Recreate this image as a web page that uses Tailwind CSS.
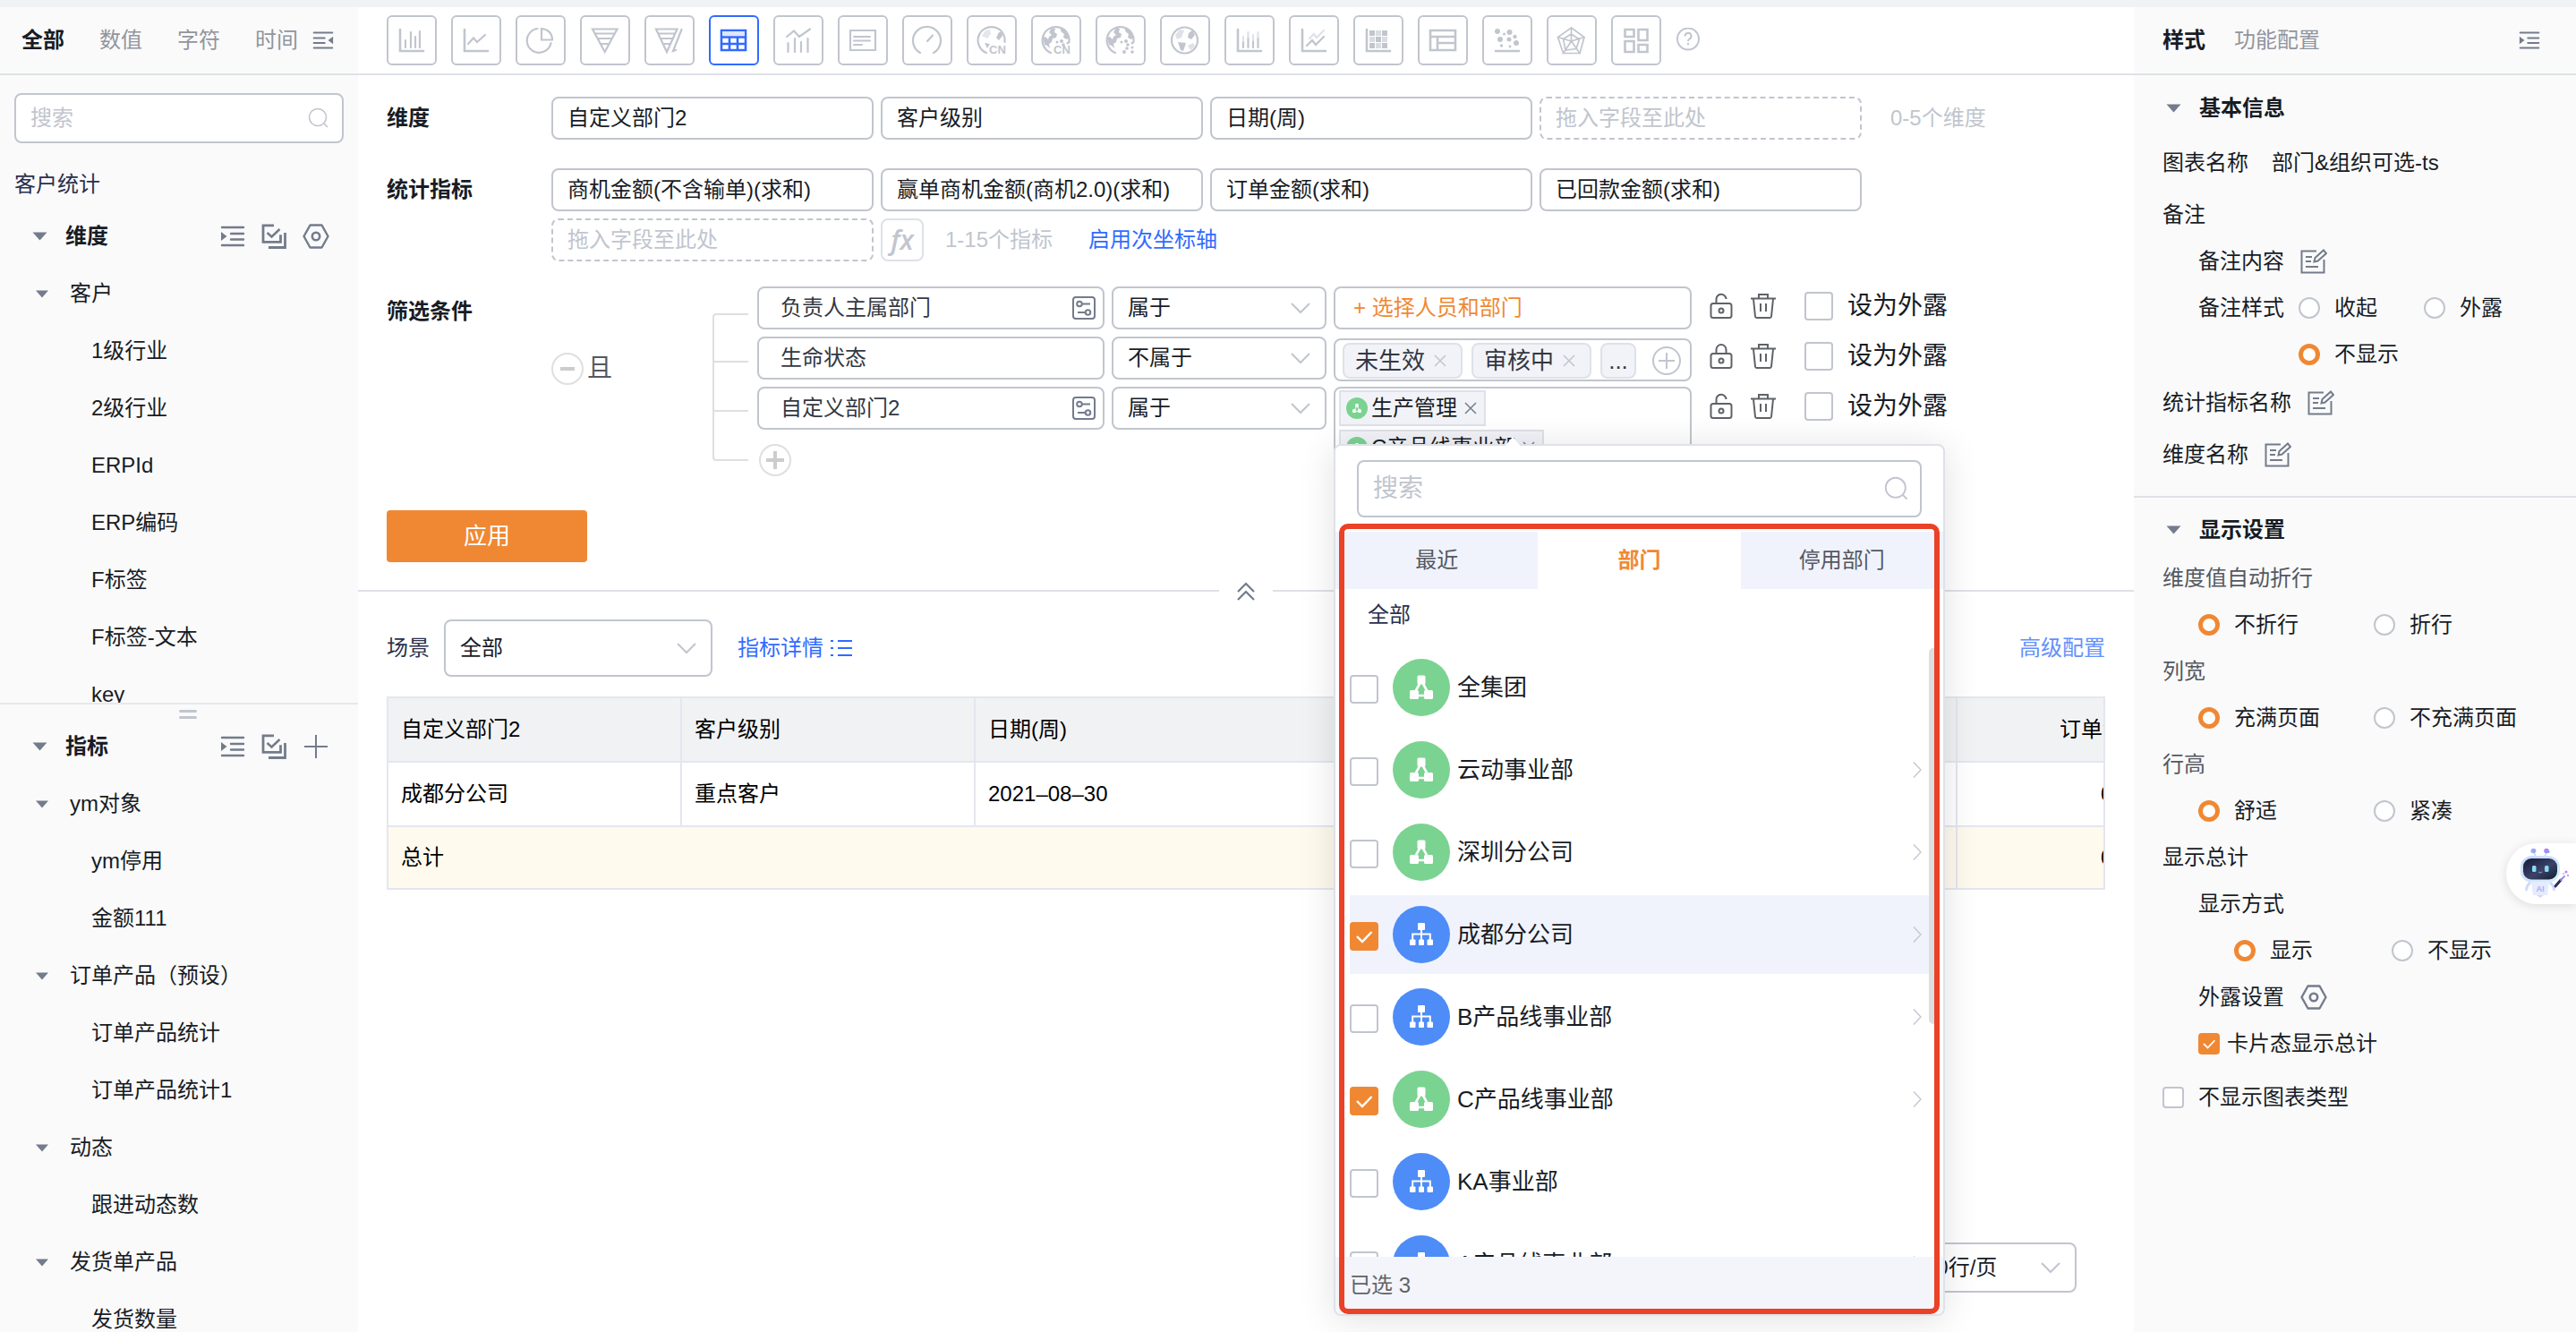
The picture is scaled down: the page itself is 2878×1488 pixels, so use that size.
<!DOCTYPE html>
<html lang="zh-CN">
<head>
    <meta charset="UTF-8">
    <meta name="viewport" content="width=device-width, initial-scale=1.0">
    <title>客户统计</title>
    <script src="https://cdn.jsdelivr.net/npm/@tailwindcss/browser@4"></script>
</head>
<body class="flex h-screen flex-col overflow-hidden bg-white font-['Liberation_Sans','Noto_Sans_CJK_SC',sans-serif] text-[24px] leading-[32px] text-[#181c25]">

    <!-- Shared icons -->
    <svg class="hidden">
        <symbol id="i-search" viewBox="0 0 24 24"><g fill="none" stroke="currentColor" stroke-width="1.6"><circle cx="11" cy="11" r="9.5"/><path d="M18 18l4 4"/></g></symbol>
        <symbol id="i-expand" viewBox="0 0 28 24"><g stroke="currentColor" stroke-width="2.4" stroke-linecap="round"><path d="M2 2h24M12 9h14M12 15.500h14M2 22h24"/></g><path d="M1 7l6.500 5L1 17z" fill="currentColor"/></symbol>
        <symbol id="i-collapse" viewBox="0 0 28 24"><g stroke="currentColor" stroke-width="2.4" stroke-linecap="round"><path d="M2 2h24M2 9h14M2 15.500h14M2 22h24"/></g><path d="M27 7l-6.500 5 6.500 5z" fill="currentColor"/></symbol>
        <symbol id="i-multi" viewBox="0 0 28 28"><g fill="none" stroke="currentColor" stroke-width="2.800"><path d="M14 1.900H2v18.400h19.500v-8"/><path d="M26.500 10v16.500H8"/><path d="M6.500 10l5 4.500 9-8.500" stroke-width="2.500"/></g></symbol>
        <symbol id="i-hex" viewBox="0 0 30 28"><g fill="none" stroke="currentColor" stroke-width="2.400"><path d="M8.500 1.500h13L28.500 14l-7 12.500h-13L1.500 14z" stroke-linejoin="round"/><circle cx="15" cy="14" r="4.200" stroke-width="2.600"/></g></symbol>
        <symbol id="i-plus" viewBox="0 0 28 28"><path d="M14 1v26M1 14h26" stroke="currentColor" stroke-width="2" fill="none"/></symbol>
        <symbol id="i-caret" viewBox="0 0 16 10"><path d="M0 .5h16L8 9.500z" fill="currentColor"/></symbol>
        <symbol id="i-down" viewBox="0 0 24 14"><path d="M2 2l10 10L22 2" stroke="currentColor" stroke-width="2" fill="none"/></symbol>
        <symbol id="i-right" viewBox="0 0 10 18"><path d="M1 .500l8 8.500-8 8.500" stroke="currentColor" stroke-width="1.300" fill="none"/></symbol>
        <symbol id="i-x" viewBox="0 0 14 14"><path d="M1 1l12 12M13 1L1 13" stroke="currentColor" stroke-width="1.500" fill="none"/></symbol>
        <symbol id="i-edit" viewBox="0 0 30 28"><g fill="none" stroke="currentColor" stroke-width="2"><path d="M18 2.500H1.500v24h25V12"/><path d="M6 9h7M6 14h6M6 20h14"/><path d="M15.500 14.500l1-4.500L26 1.500 29 5l-9.500 8.500z"/></g></symbol>
        <symbol id="i-field" viewBox="0 0 26 26"><g fill="none" stroke="currentColor" stroke-width="2"><rect x="1" y="1" width="24" height="24" rx="3"/><circle cx="8" cy="8.500" r="2.800"/><path d="M11 8.500h9M6 18h9"/><circle cx="17.500" cy="18" r="2.800"/></g></symbol>
        <symbol id="i-unlock" viewBox="0 0 26 30"><g fill="none" stroke="currentColor" stroke-width="2"><rect x="1.500" y="12" width="23" height="16" rx="2.500"/><path d="M7.500 12V7.500a5.500 5.500 0 0 1 11-.5"/><circle cx="13" cy="20" r="2.500"/></g></symbol>
        <symbol id="i-lock" viewBox="0 0 26 30"><g fill="none" stroke="currentColor" stroke-width="2"><rect x="1.500" y="12" width="23" height="16" rx="2.500"/><path d="M7.500 12V7.500a5.500 5.500 0 0 1 11 0V12"/><circle cx="13" cy="20" r="2.500"/></g></symbol>
        <symbol id="i-trash" viewBox="0 0 28 30"><g fill="none" stroke="currentColor" stroke-width="2"><path d="M0 6.500h28M9 6V2h10v4"/><path d="M3 7l2 19.500c.1 1 .8 1.500 1.600 1.500h14.800c.8 0 1.500-.5 1.600-1.500L25 7"/><path d="M11 12v9M17 12v9"/></g></symbol>
        <symbol id="i-org" viewBox="0 0 64 64"><circle cx="32" cy="32" r="32" fill="#7bd391"/><g fill="#fff"><rect x="27.500" y="18.500" width="9" height="10" rx="1.500"/><rect x="19" y="35" width="10" height="10" rx="1.500"/><rect x="35" y="35" width="10" height="10" rx="1.500"/></g><path d="M30.500 27L25 37M33.500 27L39 37M28 41h8" stroke="#fff" stroke-width="2.600"/></symbol>
        <symbol id="i-dept" viewBox="0 0 64 64"><circle cx="32" cy="32" r="32" fill="#4e8cf7"/><g fill="#fff"><rect x="28" y="19" width="8" height="8" rx="1"/><rect x="19" y="37.500" width="6.500" height="6.500" rx="1"/><rect x="29" y="37.500" width="6" height="6.500" rx="1"/><rect x="38.500" y="37.500" width="6.500" height="6.500" rx="1"/></g><path d="M32 26v12M22.200 38v-6.500h19.600V38" stroke="#fff" stroke-width="2" fill="none"/></symbol>
        <symbol id="i-tick" viewBox="0 0 32 32"><path d="M8 16l6 6L24.500 11" stroke="#fff" stroke-width="2.400" fill="none"/></symbol>
    </svg>

    <div class="h-2 shrink-0 bg-[#f1f2f4]"></div>

    <div class="flex min-h-0 flex-1">

        <!-- Field list -->
        <aside class="flex w-[400px] shrink-0 flex-col bg-[#fafafa]">
            <div class="flex h-[76px] shrink-0 items-center gap-[39px] border-b-2 border-[#dee1e8] pl-6 text-[#91959e]">
                <button class="font-bold text-[#181c25]">全部</button>
                <button>数值</button>
                <button>字符</button>
                <div class="flex items-center gap-4">
                    <button>时间</button>
                    <button aria-label="收起字段" class="text-[#737c8c]"><svg class="h-[22px] w-6"><use href="#i-collapse"/></svg></button>
                </div>
            </div>
            <div class="flex h-[701px] flex-col overflow-hidden">
                <div class="relative mx-4 mt-5 shrink-0">
                    <input type="text" aria-label="搜索字段" placeholder="搜索" class="h-14 w-full rounded-lg border-2 border-[#c1c5ce] bg-white pr-12 pl-4 placeholder:text-[#c1c5ce]">
                    <svg class="absolute top-4 right-4 h-6 w-6 text-[#c1c5ce]"><use href="#i-search"/></svg>
                </div>
                <div class="mt-5 flex h-[52px] shrink-0 items-center pl-4 text-[#2a304d]">客户统计</div>
                <div class="flex h-16 shrink-0 items-center pr-8 pl-9">
                    <svg class="mr-5 h-[10px] w-[17px] text-[#737c8c]"><use href="#i-caret"/></svg>
                    <b>维度</b>
                    <div class="ml-auto flex items-center gap-[18px] text-[#737c8c]">
                        <button aria-label="展开"><svg class="h-6 w-7"><use href="#i-expand"/></svg></button>
                        <button aria-label="多选"><svg class="h-7 w-7"><use href="#i-multi"/></svg></button>
                        <button aria-label="设置"><svg class="h-7 w-[30px]"><use href="#i-hex"/></svg></button>
                    </div>
                </div>
                <ul id="dimension-tree"></ul>
            </div>
            <div class="flex h-[17px] shrink-0 flex-col items-center gap-1 border-t-2 border-[#e6e8ee] pt-1.5 pl-5">
                <span class="h-[3px] w-5 shrink-0 rounded bg-[#c1c5ce]"></span>
                <span class="h-[3px] w-5 shrink-0 rounded bg-[#c1c5ce]"></span>
            </div>
            <div class="flex h-16 shrink-0 items-center pr-8 pl-9">
                <svg class="mr-5 h-[10px] w-[17px] text-[#737c8c]"><use href="#i-caret"/></svg>
                <b>指标</b>
                <div class="ml-auto flex items-center gap-[18px] text-[#737c8c]">
                    <button aria-label="展开"><svg class="h-6 w-7"><use href="#i-expand"/></svg></button>
                    <button aria-label="多选"><svg class="h-7 w-7"><use href="#i-multi"/></svg></button>
                    <button aria-label="新增"><svg class="h-7 w-[30px]"><use href="#i-plus"/></svg></button>
                </div>
            </div>
            <ul id="measure-tree" class="min-h-0 flex-1 overflow-hidden"></ul>
        </aside>

        <!-- Workspace -->
        <main class="flex min-w-0 flex-1 flex-col">
            <div id="chart-types" class="flex h-[76px] shrink-0 items-center gap-4 border-b-2 border-[#dee1e8] pl-8 text-[#c1c5ce]"></div>

            <section class="px-8 pt-6">
                <div class="flex">
                    <div class="flex h-12 w-[184px] shrink-0 items-center font-bold">维度</div>
                    <div class="flex flex-wrap items-center gap-2">
                        <div class="flex h-12 w-[360px] items-center rounded-lg border-2 border-[#c1c5ce] px-4">自定义部门2</div>
                        <div class="flex h-12 w-[360px] items-center rounded-lg border-2 border-[#c1c5ce] px-4">客户级别</div>
                        <div class="flex h-12 w-[360px] items-center rounded-lg border-2 border-[#c1c5ce] px-4">日期(周)</div>
                        <div class="flex h-12 w-[360px] items-center rounded-lg border-2 border-dashed border-[#c1c5ce] px-4 text-[#c1c5ce]">拖入字段至此处</div>
                        <span class="ml-6 text-[#c1c5ce]">0-5个维度</span>
                    </div>
                </div>

                <div class="mt-8 flex">
                    <div class="flex h-12 w-[184px] shrink-0 items-center font-bold">统计指标</div>
                    <div class="flex flex-wrap items-center gap-2">
                        <div class="flex h-12 w-[360px] items-center rounded-lg border-2 border-[#c1c5ce] px-4">商机金额(不含输单)(求和)</div>
                        <div class="flex h-12 w-[360px] items-center rounded-lg border-2 border-[#c1c5ce] px-4">赢单商机金额(商机2.0)(求和)</div>
                        <div class="flex h-12 w-[360px] items-center rounded-lg border-2 border-[#c1c5ce] px-4">订单金额(求和)</div>
                        <div class="flex h-12 w-[360px] items-center rounded-lg border-2 border-[#c1c5ce] px-4">已回款金额(求和)</div>
                        <div class="flex h-12 w-[360px] items-center rounded-lg border-2 border-dashed border-[#c1c5ce] px-4 text-[#c1c5ce]">拖入字段至此处</div>
                        <button class="h-12 w-12 rounded-lg border-2 border-[#dee1e8] font-['Open_Sans'] text-[30px] font-semibold text-[#c1c5ce] italic">fx</button>
                        <span class="ml-4 text-[#c1c5ce]">1-15个指标</span>
                        <a href="#" class="ml-8 text-[#316bff]">启用次坐标轴</a>
                    </div>
                </div>

                <div class="mt-7 flex">
                    <div class="flex h-14 w-[184px] shrink-0 items-center font-bold">筛选条件</div>
                    <div class="flex w-[180px] shrink-0 items-center gap-1 self-start pt-[74px]">
                        <button aria-label="删除条件组"><svg class="h-9 w-9" viewBox="0 0 36 36"><circle cx="18" cy="18" r="17" fill="none" stroke="#dfdfdf" stroke-width="2"/><path d="M10 18h16" stroke="#ccc" stroke-width="4"/></svg></button>
                        <span class="text-[28px] text-[#545861]">且</span>
                    </div>
                    <div class="mr-[10px] w-10 shrink-0 pt-[30px]">
                        <div class="h-[55px] rounded-tl border-t-2 border-b-2 border-l-2 border-[#dfdfdf]"></div>
                        <div class="h-[55px] border-b-2 border-l-2 border-[#dfdfdf]"></div>
                        <div class="h-[55px] rounded-bl border-b-2 border-l-2 border-[#dfdfdf]"></div>
                    </div>
                    <div class="flex flex-col gap-2">
                        <!-- Condition 1 -->
                        <div class="flex h-12 items-start gap-2">
                            <div class="flex h-12 w-[388px] items-center justify-between rounded-lg border-2 border-[#c1c5ce] pr-2 pl-6 text-[#333842]">负责人主属部门<svg class="h-[26px] w-[26px] text-[#737c8c]"><use href="#i-field"/></svg></div>
                            <div class="relative w-[240px]">
                                <select aria-label="负责人主属部门条件" class="h-12 w-full appearance-none rounded-lg border-2 border-[#c1c5ce] bg-white px-4"><option>属于</option></select>
                                <svg class="pointer-events-none absolute top-[17px] right-[17px] h-[14px] w-6 text-[#c1c5ce]"><use href="#i-down"/></svg>
                            </div>
                            <button class="h-12 w-[400px] rounded-lg border-2 border-[#c1c5ce] px-5 text-left text-[#f08833]">+ 选择人员和部门</button>
                            <div class="ml-3 flex h-11 items-center text-[#5f6368]">
                                <button aria-label="锁定" class="mr-5"><svg class="h-[30px] w-[26px]"><use href="#i-unlock"/></svg></button>
                                <button aria-label="删除" class="mr-8"><svg class="h-[30px] w-7"><use href="#i-trash"/></svg></button>
                                <label class="flex items-center gap-4 text-[28px] text-[#181c25]"><input type="checkbox" class="h-8 w-8 appearance-none rounded border-2 border-[#c1c5ce] bg-white">设为外露</label>
                            </div>
                        </div>
                        <!-- Condition 2 -->
                        <div class="flex h-12 items-start gap-2">
                            <div class="flex h-12 w-[388px] items-center rounded-lg border-2 border-[#c1c5ce] pl-6 text-[#333842]">生命状态</div>
                            <div class="relative w-[240px]">
                                <select aria-label="生命状态条件" class="h-12 w-full appearance-none rounded-lg border-2 border-[#c1c5ce] bg-white px-4"><option>不属于</option></select>
                                <svg class="pointer-events-none absolute top-[17px] right-[17px] h-[14px] w-6 text-[#c1c5ce]"><use href="#i-down"/></svg>
                            </div>
                            <div class="mt-0.5 flex h-12 w-[400px] items-center gap-[10px] rounded-lg border-2 border-[#c1c5ce] pt-0.5 pl-2 text-[26px] text-[#333842]">
                                <span class="flex h-10 w-[134px] items-center justify-between rounded-lg border-2 border-[#dee1e8] bg-[#f2f3f8] pr-4 pl-3">未生效<svg class="h-[14px] w-[14px] text-[#c1c5ce]"><use href="#i-x"/></svg></span>
                                <span class="flex h-10 w-[134px] items-center justify-between rounded-lg border-2 border-[#dee1e8] bg-[#f2f3f8] pr-4 pl-3">审核中<svg class="h-[14px] w-[14px] text-[#c1c5ce]"><use href="#i-x"/></svg></span>
                                <span class="flex h-10 w-10 items-center justify-center rounded-lg border-2 border-[#dee1e8] bg-[#f2f3f8]">...</span>
                                <button aria-label="添加选项" class="ml-2 text-[#c1c5ce]"><svg class="h-8 w-8" viewBox="0 0 32 32" fill="none" stroke="currentColor" stroke-width="2"><circle cx="16" cy="16" r="15"/><path d="M16 7v18M7 16h18"/></svg></button>
                            </div>
                            <div class="ml-3 flex h-11 items-center text-[#5f6368]">
                                <button aria-label="解锁" class="mr-5"><svg class="h-[30px] w-[26px]"><use href="#i-lock"/></svg></button>
                                <button aria-label="删除" class="mr-8"><svg class="h-[30px] w-7"><use href="#i-trash"/></svg></button>
                                <label class="flex items-center gap-4 text-[28px] text-[#181c25]"><input type="checkbox" class="h-8 w-8 appearance-none rounded border-2 border-[#c1c5ce] bg-white">设为外露</label>
                            </div>
                        </div>
                        <!-- Condition 3, with its department picker open -->
                        <div class="flex h-12 items-start gap-2">
                            <div class="flex h-12 w-[388px] items-center justify-between rounded-lg border-2 border-[#c1c5ce] pr-2 pl-6 text-[#333842]">自定义部门2<svg class="h-[26px] w-[26px] text-[#737c8c]"><use href="#i-field"/></svg></div>
                            <div class="relative w-[240px]">
                                <select aria-label="自定义部门2条件" class="h-12 w-full appearance-none rounded-lg border-2 border-[#c1c5ce] bg-white px-4"><option>属于</option></select>
                                <svg class="pointer-events-none absolute top-[17px] right-[17px] h-[14px] w-6 text-[#c1c5ce]"><use href="#i-down"/></svg>
                            </div>
                            <div class="relative w-[400px]">
                                <div class="flex flex-col items-start gap-1 rounded-lg border-2 border-[#c1c5ce] px-1 py-0.5">
                                    <span class="flex h-10 items-center gap-1 border-2 border-[#dee1e8] bg-[#f2f3f8] pr-2 pl-1.5"><svg class="h-6 w-6"><use href="#i-org"/></svg>生产管理<svg class="ml-1 h-[14px] w-[14px] text-[#737c8c]"><use href="#i-x"/></svg></span>
                                    <span class="flex h-10 items-center gap-1 border-2 border-[#dee1e8] bg-[#f2f3f8] pr-2 pl-1.5"><svg class="h-6 w-6"><use href="#i-org"/></svg>C产品线事业部<svg class="ml-1 h-[14px] w-[14px] text-[#737c8c]"><use href="#i-x"/></svg></span>
                                </div>
                                <div class="absolute top-16 left-0 z-10 flex h-[974px] w-[683px] flex-col rounded-lg border-2 border-[#dee1e8] bg-white pt-4 shadow-[0_4px_40px_rgba(0,0,0,0.12)]">
                                    <svg class="absolute -top-3 left-[188px] h-[14px] w-5" viewBox="0 0 20 14"><path d="M10 2l10 12H0z" fill="#fff"/></svg>
                                    <div class="relative mx-6">
                                        <input type="text" aria-label="搜索部门" placeholder="搜索" class="h-16 w-full rounded-lg border-2 border-[#c1c5ce] pr-14 pl-4 text-[28px] placeholder:text-[#c1c5ce]">
                                        <svg class="absolute top-[18px] right-[14px] h-7 w-7 text-[#c1c5ce]"><use href="#i-search"/></svg>
                                    </div>
                                    <div class="mt-4 grid h-16 shrink-0 grid-cols-3 text-[#545861]">
                                        <button class="bg-[#f0f3fc]">最近</button>
                                        <button class="bg-white font-bold text-[#f08833]">部门</button>
                                        <button class="bg-[#f0f3fc]">停用部门</button>
                                    </div>
                                    <div class="mb-2 flex h-[58px] shrink-0 items-center pl-9 text-[#2a304d]">全部</div>
                                    <div class="flex min-h-0 flex-1 overflow-hidden pr-1.5 pl-4">
                                        <ul id="dept-list" class="flex flex-1 flex-col gap-1 text-[26px]"></ul>
                                        <div class="h-[420px] w-[10px] rounded-full bg-[#dcdfdf]"></div>
                                    </div>
                                    <div class="flex h-16 shrink-0 items-center rounded-b-lg bg-[#f4f5fa] pl-4 text-[#5f6368]">已选 3</div>
                                    <div class="pointer-events-none absolute top-[87px] right-1 bottom-0 left-1 rounded-[10px] border-[6px] border-[#ea4127]"></div>
                                </div>
                            </div>
                            <div class="ml-3 flex h-11 items-center text-[#5f6368]">
                                <button aria-label="锁定" class="mr-5"><svg class="h-[30px] w-[26px]"><use href="#i-unlock"/></svg></button>
                                <button aria-label="删除" class="mr-8"><svg class="h-[30px] w-7"><use href="#i-trash"/></svg></button>
                                <label class="flex items-center gap-4 text-[28px] text-[#181c25]"><input type="checkbox" class="h-8 w-8 appearance-none rounded border-2 border-[#c1c5ce] bg-white">设为外露</label>
                            </div>
                        </div>
                        <button aria-label="添加条件" class="mt-2 ml-0.5 self-start"><svg class="h-9 w-9" viewBox="0 0 36 36"><circle cx="18" cy="18" r="17" fill="none" stroke="#dfdfdf" stroke-width="2"/><path d="M8 18h20M18 8v20" stroke="#ccc" stroke-width="4"/></svg></button>
                    </div>
                </div>

                <button class="mt-[38px] block h-[58px] w-56 rounded bg-[#f08833] text-[26px] text-white">应用</button>
            </section>

            <div class="mt-5 flex h-6 shrink-0 items-center gap-5">
                <span class="h-0.5 flex-1 bg-[#dee1e8]"></span>
                <button aria-label="收起" class="text-[#737c8c]"><svg class="h-6 w-5" viewBox="0 0 20 24" fill="none" stroke="currentColor" stroke-width="2.200"><path d="M1 13l9-9 9 9M1 22l9-9 9 9"/></svg></button>
                <span class="h-0.5 flex-1 bg-[#dee1e8]"></span>
            </div>

            <section class="flex min-h-0 flex-1 flex-col px-8 pt-5">
                <div class="flex shrink-0 items-center">
                    <label for="scene" class="mr-4 text-[#2a304d]">场景</label>
                    <div class="relative w-[300px]">
                        <select id="scene" class="h-16 w-full appearance-none rounded-lg border-2 border-[#c1c5ce] bg-white px-4"><option>全部</option></select>
                        <svg class="pointer-events-none absolute top-[25px] right-[17px] h-[14px] w-6 text-[#c1c5ce]"><use href="#i-down"/></svg>
                    </div>
                    <a href="#" class="ml-7 flex items-center gap-2 text-[#316bff]">指标详情<svg class="h-6 w-6" viewBox="0 0 24 24" stroke="currentColor" stroke-width="2"><path d="M0 4h3M0 12h3M0 20h3M8 4h16M8 12h16M8 20h16"/></svg></a>
                    <a href="#" class="ml-auto text-[#6490fb]">高级配置</a>
                </div>

                <div class="mt-[22px] overflow-hidden border-r-2 border-[#e4e6ef]">
                    <table class="w-full table-fixed border-collapse text-left whitespace-nowrap text-black">
                        <colgroup>
                            <col class="w-[328px]"><col class="w-[328px]"><col class="w-[480px]"><col><col class="w-[164px]">
                        </colgroup>
                        <thead>
                            <tr class="h-[72px] bg-[#f1f2f4]">
                                <th class="border-2 border-[#e4e6ef] px-3.5 font-normal">自定义部门2</th>
                                <th class="border-2 border-[#e4e6ef] px-3.5 font-normal">客户级别</th>
                                <th class="border-2 border-[#e4e6ef] px-3.5 font-normal">日期(周)</th>
                                <th class="border-2 border-[#e4e6ef]"></th>
                                <th class="overflow-hidden border-y-2 border-l-2 border-[#e4e6ef] pl-[114px] font-normal">订单金额(求和)</th>
                            </tr>
                        </thead>
                        <tbody>
                            <tr class="h-[72px]">
                                <td class="border-2 border-[#e4e6ef] px-3.5">成都分公司</td>
                                <td class="border-2 border-[#e4e6ef] px-3.5">重点客户</td>
                                <td class="border-2 border-[#e4e6ef] px-3.5">2021–08–30</td>
                                <td class="border-2 border-[#e4e6ef]"></td>
                                <td class="overflow-hidden border-y-2 border-l-2 border-[#e4e6ef] pl-40">0.00</td>
                            </tr>
                            <tr class="h-[70px] bg-[#fffaee]">
                                <td colspan="3" class="border-2 border-[#e4e6ef] px-3.5">总计</td>
                                <td class="border-2 border-[#e4e6ef]"></td>
                                <td class="overflow-hidden border-y-2 border-l-2 border-[#e4e6ef] pl-40">0.00</td>
                            </tr>
                        </tbody>
                    </table>
                </div>

                <div class="relative mt-auto mr-8 mb-11 w-[188px] self-end">
                    <select aria-label="每页行数" class="h-14 w-full appearance-none rounded-lg border-2 border-[#c1c5ce] bg-white px-4"><option>20行/页</option></select>
                    <svg class="pointer-events-none absolute top-[21px] right-[17px] h-[14px] w-6 text-[#c1c5ce]"><use href="#i-down"/></svg>
                </div>
            </section>
        </main>

        <!-- Settings -->
        <aside class="relative w-[494px] shrink-0 bg-[#fafafa]">
            <div class="flex h-[76px] items-center border-b-2 border-[#dee1e8] pr-10 pl-8">
                <button class="mr-8 font-bold">样式</button>
                <button class="text-[#91959e]">功能配置</button>
                <button aria-label="收起设置" class="ml-auto text-[#737c8c]"><svg class="h-[22px] w-6"><use href="#i-expand"/></svg></button>
            </div>

            <section class="border-b-2 border-[#dee1e8] pb-4 pl-8">
                <h2 class="flex h-[74px] items-center font-bold"><svg class="mr-5 ml-1 h-[10px] w-[17px] text-[#737c8c]"><use href="#i-caret"/></svg>基本信息</h2>
                <div class="flex h-12 items-center gap-[26px]"><span>图表名称</span><span>部门&amp;组织可选-ts</span></div>
                <div class="mt-1 flex h-[60px] items-center">备注</div>
                <div class="flex h-11 items-center gap-[18px] pl-10">备注内容<button aria-label="编辑备注内容"><svg class="h-7 w-[30px] text-[#737c8c]"><use href="#i-edit"/></svg></button></div>
                <div class="flex items-start pt-1 pl-10">
                    <span class="mr-4 flex h-[52px] items-center">备注样式</span>
                    <div class="grid grid-cols-[140px_140px]">
                        <label class="flex h-[52px] items-center gap-4"><input type="radio" name="remark" class="h-6 w-6 appearance-none rounded-full border-2 border-[#c1c5ce] bg-white">收起</label>
                        <label class="flex h-[52px] items-center gap-4"><input type="radio" name="remark" class="h-6 w-6 appearance-none rounded-full border-2 border-[#c1c5ce] bg-white">外露</label>
                        <label class="flex h-[52px] items-center gap-4"><input type="radio" name="remark" checked class="h-6 w-6 appearance-none rounded-full border-[5px] border-[#f08833] bg-white">不显示</label>
                    </div>
                </div>
                <div class="flex h-[56px] items-center gap-[18px]">统计指标名称<button aria-label="编辑统计指标名称"><svg class="h-7 w-[30px] text-[#737c8c]"><use href="#i-edit"/></svg></button></div>
                <div class="flex h-[60px] items-center gap-[18px]">维度名称<button aria-label="编辑维度名称"><svg class="h-7 w-[30px] text-[#737c8c]"><use href="#i-edit"/></svg></button></div>
            </section>

            <section class="pt-2 pl-8">
                <h2 class="flex h-14 items-center font-bold"><svg class="mr-5 ml-1 h-[10px] w-[17px] text-[#737c8c]"><use href="#i-caret"/></svg>显示设置</h2>
                <div class="flex h-[52px] items-center text-[#545861]">维度值自动折行</div>
                <div class="grid h-[52px] grid-cols-[196px_1fr] items-center pl-10">
                    <label class="flex items-center gap-4"><input type="radio" name="wrap" checked class="h-6 w-6 appearance-none rounded-full border-[5px] border-[#f08833] bg-white">不折行</label>
                    <label class="flex items-center gap-4"><input type="radio" name="wrap" class="h-6 w-6 appearance-none rounded-full border-2 border-[#c1c5ce] bg-white">折行</label>
                </div>
                <div class="flex h-[52px] items-center text-[#545861]">列宽</div>
                <div class="grid h-[52px] grid-cols-[196px_1fr] items-center pl-10">
                    <label class="flex items-center gap-4"><input type="radio" name="col" checked class="h-6 w-6 appearance-none rounded-full border-[5px] border-[#f08833] bg-white">充满页面</label>
                    <label class="flex items-center gap-4"><input type="radio" name="col" class="h-6 w-6 appearance-none rounded-full border-2 border-[#c1c5ce] bg-white">不充满页面</label>
                </div>
                <div class="flex h-[52px] items-center text-[#545861]">行高</div>
                <div class="grid h-[52px] grid-cols-[196px_1fr] items-center pl-10">
                    <label class="flex items-center gap-4"><input type="radio" name="row" checked class="h-6 w-6 appearance-none rounded-full border-[5px] border-[#f08833] bg-white">舒适</label>
                    <label class="flex items-center gap-4"><input type="radio" name="row" class="h-6 w-6 appearance-none rounded-full border-2 border-[#c1c5ce] bg-white">紧凑</label>
                </div>
                <div class="flex h-[52px] items-center">显示总计</div>
                <div class="flex h-[52px] items-center pl-10">显示方式</div>
                <div class="grid h-[52px] grid-cols-[176px_1fr] items-center pl-20">
                    <label class="flex items-center gap-4"><input type="radio" name="total" checked class="h-6 w-6 appearance-none rounded-full border-[5px] border-[#f08833] bg-white">显示</label>
                    <label class="flex items-center gap-4"><input type="radio" name="total" class="h-6 w-6 appearance-none rounded-full border-2 border-[#c1c5ce] bg-white">不显示</label>
                </div>
                <div class="flex h-[52px] items-center gap-[18px] pl-10">外露设置<button aria-label="外露设置"><svg class="h-7 w-[30px] text-[#737c8c]"><use href="#i-hex"/></svg></button></div>
                <label class="flex h-[52px] items-center gap-2 pl-10">
                    <span class="relative flex"><input type="checkbox" checked class="h-6 w-6 appearance-none rounded border-2 border-[#f08833] bg-[#f08833]"><svg class="pointer-events-none absolute inset-0 h-6 w-6"><use href="#i-tick"/></svg></span>卡片态显示总计
                </label>
                <label class="flex h-[68px] items-center gap-4"><input type="checkbox" class="h-6 w-6 appearance-none rounded border-2 border-[#c1c5ce] bg-white">不显示图表类型</label>
            </section>

            <!-- AI assistant -->
            <button aria-label="AI 助手" class="absolute top-[934px] right-0 h-[68px] w-[78px] rounded-l-full bg-white shadow-[0_2px_12px_rgba(0,0,0,0.12)]">
                <svg class="h-[68px] w-[78px]" viewBox="0 0 78 68">
                    <defs>
                        <linearGradient id="face" x1="0" y1="0" x2="1" y2="1"><stop offset="0" stop-color="#141a38"/><stop offset=".55" stop-color="#3c4268"/><stop offset="1" stop-color="#10202c"/></linearGradient>
                        <linearGradient id="shell" x1="0" y1="0" x2="1" y2="1"><stop offset="0" stop-color="#c9d8ff"/><stop offset="1" stop-color="#d8f1f8"/></linearGradient>
                    </defs>
                    <path d="M33 15l-2-5M43 15l2-5" stroke="#c8d4fb" stroke-width="1.500"/>
                    <circle cx="30.500" cy="8.500" r="2.800" fill="#a9a0fb"/><circle cx="45" cy="8.500" r="2.800" fill="#b184f5"/><circle cx="29" cy="9" r="1.500" fill="#72c6f4"/><circle cx="47" cy="9.500" r="1.500" fill="#72a6f4"/>
                    <rect x="16" y="14" width="44" height="30" rx="13" fill="url(#shell)"/>
                    <path d="M28 43h20l-2 15H30z" fill="#e6ebfd"/><path d="M27 44c-4 3-5 7-4 9M49 44c4 3 5 7 4 9" stroke="#cfd9fa" stroke-width="3" fill="none"/><path d="M34 58h8l-4 3z" fill="#cfd9fa"/>
                    <rect x="19" y="17" width="38" height="23.500" rx="9" fill="url(#face)"/>
                    <rect x="29" y="25" width="4.500" height="7" rx="1.500" fill="#86dcf7"/><rect x="43" y="25" width="4.500" height="7" rx="1.500" fill="#86dcf7"/>
                    <path d="M36 32q2.200 2 4.400 0" stroke="#8fa4d8" fill="none"/>
                    <text x="38" y="54" text-anchor="middle" font-size="9" font-weight="700" fill="#a3b1f3">AI</text>
                    <path d="M55 48l6-7" stroke="#2b3157" stroke-width="3" stroke-linecap="round"/><path d="M61 41l4-4" stroke="#9a8af2" stroke-width="2" stroke-linecap="round"/>
                    <circle cx="67" cy="32" r="1.500" fill="#c57cf0"/><circle cx="69" cy="36" r="1" fill="#8b84f5"/><circle cx="64" cy="34" r="1" fill="#d7a3f5"/>
                </svg>
            </button>
        </aside>
    </div>

    <script>
        const axis = '<path d="M15 16v24h26" stroke-width="2.600"/>';
        const globe = '<circle cx="27.500" cy="28" r="14.500"/>';
        const openGlobe = '<path d="M22 42A15 15 0 1 1 42.500 30"/>';
        const land = '<path d="M13 25l3-1 3 3 1-3 3-2-3-3 3-5 4 1-1 4 3 2-1 4-4 1-1 4-3 2 1 5-3-3-3-1zM32 14l2 5 3 2-1 4 4 2 2-1-2-6-4-5z" fill="currentColor" stroke="none"/>';
        const dots = '<g fill="currentColor" stroke="none"><circle cx="29" cy="30" r="1.500"/><circle cx="34" cy="29" r="2"/><circle cx="41" cy="31" r="1.500"/><circle cx="36" cy="33" r="1.800"/></g>';
        const dotsLow = '<g fill="currentColor" stroke="none"><circle cx="35" cy="37" r="1.800"/><circle cx="41" cy="36" r="1.500"/><circle cx="32" cy="41" r="2"/><circle cx="41" cy="41" r="1.800"/></g>';
        const cn = '<text x="25" y="43" font-size="13" font-weight="700" fill="currentColor" stroke="none">CN</text>';

        // Drawn on a 56 x 56 grid, one per toolbar button
        const chartTypes = [
            ['柱状图', axis + '<path d="M21 28v8M27 19v17M32 24v12M37 18v18"/>'],
            ['折线图', axis + '<path d="M19 32l6-6.500 4 4.500 9-8"/>'],
            ['饼图', '<path d="M24.500 15A13.500 13.500 0 1 0 39.500 31"/><path d="M29 15v12.500h12C41 20 36 15.500 29 15z"/>'],
            ['漏斗图', '<path d="M14 15.500h27.500L27.700 41z"/><path d="M17 20.500h21M20 26h15M23 32h9"/>'],
            ['对比漏斗图', '<path d="M13 15.500h23.500L25 41z"/><path d="M16 20.500h18M19 26h12M22 32h6M41.500 16L32 40l3-1"/>'],
            ['表格', '<path d="M14 17h27v22H14zM14 24.500h27M14 32h27M23 24.500V39M32 24.500V39" stroke-width="2.600"/><path d="M15 18h25v5H15z" fill="#dbe6ff" stroke="none"/>'],
            ['组合图', '<path d="M15 24l8-6.500 6 6.500L41 15.500M16.500 31v10M24 26v15M31 30v11M38.500 26v15"/>'],
            ['文本', '<path d="M14 17h28v22H14z"/><path d="M18 24h18M18 28.500h18M18 33h9"/>'],
            ['仪表盘', '<path d="M20 42a15.500 15.500 0 1 1 15 0M28 29l6-6.500"/>'],
            ['中国地图', openGlobe + '<path d="M33 25l3-6 3 0 1 4-4 5zM20 31l6 1-3 5z" fill="currentColor" stroke="none"/><path d="M17 23l4-6 5-1 1 5-4 5z" fill="#e4e6ec" stroke="none"/>' + cn],
            ['中国散点地图', openGlobe + land + dots + cn],
            ['散点地图', openGlobe + land + dots + dotsLow],
            ['世界地图', globe + '<path d="M32 20l4-3 3 5-4 5-4-2zM20 30l9 1-3 9-3-1z" fill="currentColor" stroke="none"/><path d="M17 22l5-6 5 1-3 8-5 2zM31 34l6-3 2 4-5 4z" fill="#dfe1e8" stroke="none"/>'],
            ['堆积柱图', axis + '<path d="M21 29v7M26.500 25v11M32 28v8M37.500 25v11"/><path d="M21 24v5M26.500 19v6M32 22v6M37.500 19v6" stroke="#e0e2e9"/>'],
            ['多折线图', axis + '<path d="M20 34l6-6 4 5 9-9"/><path d="M23 26l5-5 3 4 8-8" stroke="#e0e2e9"/>'],
            ['热力图', axis + '<g fill="currentColor" stroke="none"><path d="M18 17h6v6h-6zM32 17h6v6h-6zM25 24h6v6h-6zM18 31h6v6h-6zM32 31h6v6h-6z"/><path d="M25 17h6v6h-6zM18 24h6v6h-6zM32 24h6v6h-6zM25 31h6v6h-6z" opacity=".6"/></g>'],
            ['透视表', '<path d="M14 17h28v22H14zM14 24h28M22 24v15M22 31h20" stroke-width="2.600"/>'],
            ['散点图', '<path d="M15 40h26" stroke-width="2.600"/><g fill="currentColor" stroke="none"><circle cx="17" cy="18" r="3"/><circle cx="30.500" cy="19" r="3"/><circle cx="24.500" cy="21" r="1.500"/><circle cx="36.500" cy="24" r="2.200"/><circle cx="20" cy="27" r="3"/><circle cx="30" cy="27" r="2.500"/><circle cx="38" cy="31" r="3"/><circle cx="21.500" cy="34" r="1.700"/><circle cx="31" cy="35" r="1.400"/></g>'],
            ['雷达图', '<g stroke-width="1.700"><path d="M27.500 14L42 24.500 37 42.500H18.500L12.500 24.500z"/><path d="M27.500 21l9 6-3.500 10.500L21 39l-2.500-12.500zM27.500 14v15M42 24.500L27.500 29 37 42.500M27.500 29l-9 13.500M27.500 29l-15-4.500"/></g>'],
            ['指标卡', '<path d="M15.500 16h10v8h-10zM30.500 16h10v12h-10zM15.500 29h10v12h-10zM30.500 33h10v8h-10z" stroke-width="2.600"/>']
        ];

        document.getElementById('chart-types').innerHTML = chartTypes.map(([name, art]) => {
            const cls = name === '表格' ? 'border-[#316bff] text-[#316bff]' : 'border-[#c1c5ce]';
            return `<button aria-label="${name}" class="flex h-14 w-14 items-center justify-center rounded-md border-2 ${cls}">
                <svg class="h-14 w-14 shrink-0" viewBox="0 0 56 56" fill="none" stroke="currentColor" stroke-width="2.200" stroke-linecap="round">${art}</svg></button>`;
        }).join('') + `<button aria-label="帮助"><svg class="h-7 w-7" viewBox="0 0 28 28" fill="none" stroke="currentColor" stroke-width="2"><circle cx="14" cy="12.500" r="12"/><path d="M10.500 9.500a3.500 3.500 0 1 1 5 3c-1.200.7-1.500 1.300-1.500 2.700M14 17v2.200"/></svg></button>`;

        // A group starts with its own name; the rest are its fields
        function renderTree(id, groups) {
            document.getElementById(id).innerHTML = groups.map(([group, ...fields]) =>
                `<li class="flex h-16 items-center pl-10"><svg class="mr-6 h-[9px] w-[14px] text-[#737c8c]"><use href="#i-caret"/></svg>${group}</li>` +
                fields.map(field => `<li class="flex h-16 items-center pl-[102px]">${field}</li>`).join('')
            ).join('');
        }

        renderTree('dimension-tree', [['客户', '1级行业', '2级行业', 'ERPId', 'ERP编码', 'F标签', 'F标签-文本', 'key']]);
        renderTree('measure-tree', [
            ['ym对象', 'ym停用', '金额111'],
            ['订单产品（预设）', '订单产品统计', '订单产品统计1'],
            ['动态', '跟进动态数'],
            ['发货单产品', '发货数量']
        ]);

        const departments = [
            { name: '全集团', icon: 'org' },
            { name: '云动事业部', icon: 'org', more: true },
            { name: '深圳分公司', icon: 'org', more: true },
            { name: '成都分公司', icon: 'dept', more: true, checked: true, active: true },
            { name: 'B产品线事业部', icon: 'dept', more: true },
            { name: 'C产品线事业部', icon: 'org', more: true, checked: true },
            { name: 'KA事业部', icon: 'dept' },
            { name: 'A产品线事业部', icon: 'dept', more: true }
        ];

        document.getElementById('dept-list').innerHTML = departments.map(d => `
            <li class="flex h-[88px] shrink-0 items-center pr-2 ${d.active ? 'bg-[#f0f3fc]' : ''}">
                <label class="flex items-center">
                    <span class="relative mt-1 mr-4 flex">
                        <input type="checkbox" ${d.checked ? 'checked' : ''} class="h-8 w-8 appearance-none rounded border-2 ${d.checked ? 'border-[#f08833] bg-[#f08833]' : 'border-[#c1c5ce] bg-white'}">
                        ${d.checked ? '<svg class="pointer-events-none absolute inset-0 h-8 w-8"><use href="#i-tick"/></svg>' : ''}
                    </span>
                    <svg class="mr-2 h-16 w-16"><use href="#i-${d.icon}"/></svg>${d.name}
                </label>
                ${d.more ? '<svg class="ml-auto h-[18px] w-[10px] text-[#c1c5ce]"><use href="#i-right"/></svg>' : ''}
            </li>`).join('');
    </script>
</body>
</html>
